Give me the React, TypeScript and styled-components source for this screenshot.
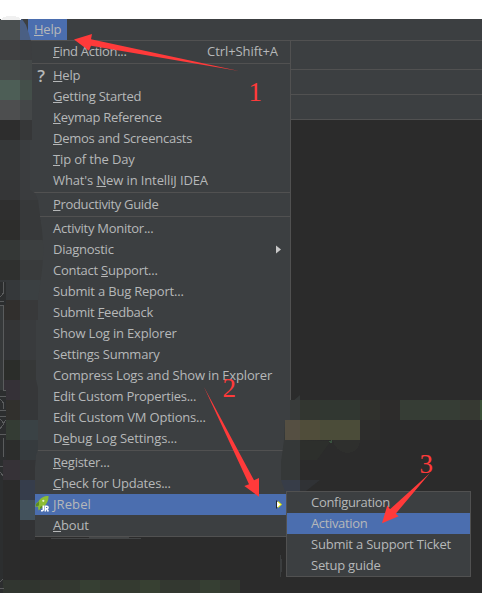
import React from "react";
import styled, { createGlobalStyle } from "styled-components";

const GlobalStyle = createGlobalStyle`
  * { box-sizing: border-box; }
  body { margin: 0; background: #fff; overflow: hidden; }
`;

const Page = styled.div`
  position: relative;
  width: 482px;
  height: 593px;
  overflow: hidden;
  display: flex;
  flex-direction: column;
  padding-top: 19px;
  background: #fff;
  color: #b6b8b9;
  font: 13px/21px "Open Sans", "Noto Sans", sans-serif;
  letter-spacing: -0.15px;
  white-space: pre;
`;

const MenuBar = styled.nav`
  height: 22px;
  flex: none;
  display: flex;
  padding-left: 28px;
  background: #3c3f41;
  border-bottom: 1px solid #515151;
`;

const MenuTitle = styled.div`
  width: 39px;
  padding-left: 6px;
  background: #4b6eaf;
`;

const Toolbar = styled.div<{ $height: number }>`
  height: ${(p) => p.$height}px;
  flex: none;
  background: #3c3f41;
  border-bottom: 1px solid #515151;
`;

const Editor = styled.main`
  flex: 1;
  background: #2b2b2b;
`;

const Popup = styled.div<{ $left: number; $top: number; $width: number }>`
  position: absolute;
  left: ${(p) => p.$left}px;
  top: ${(p) => p.$top}px;
  width: ${(p) => p.$width}px;
  background: #3c3f41;
  border: 1px solid #515151;
`;

const Row = styled.div<{ $active?: boolean; $indent: number }>`
  position: relative;
  height: 21px;
  display: flex;
  align-items: center;
  justify-content: space-between;
  padding: 0 8px 0 ${(p) => p.$indent}px;
  background: ${(p) => (p.$active ? "#4b6eaf" : "transparent")};
`;

const Label = styled.span<{ $spacing?: number }>`
  letter-spacing: ${(p) => p.$spacing ?? -0.15}px;
`;

const Shortcut = styled.span`
  margin-right: 4px;
  letter-spacing: -0.08px;
`;

const Mnemonic = styled.span`
  text-decoration: underline;
  text-decoration-thickness: 1px;
  text-underline-offset: 1px;
  text-decoration-skip-ink: none;
`;

const Separator = styled.hr`
  margin: 1px 0;
  height: 1px;
  border: 0;
  background: #515151;
`;

const RowIcon = styled.span`
  position: absolute;
  left: 13px;
  top: 1px;
  width: 14px;
  height: 20px;
  font: 600 17px/19px "Open Sans", sans-serif;
  text-align: center;
`;

const Overlay = styled.svg`
  position: absolute;
  inset: 0;
  pointer-events: none;
`;

const Callout = styled.text`
  font: 27px "Liberation Serif", serif;
  letter-spacing: 0;
  fill: #ff3a3a;
`;

type Item = {
  text: string;
  icon?: "help" | "jrebel";
  shortcut?: string;
  submenu?: boolean;
  active?: boolean;
  spacing?: number;
};

// An underscore precedes the mnemonic letter; null is a separator.
const helpItems: (Item | null)[] = [
  { text: "_Find Action...", shortcut: "Ctrl+Shift+A", spacing: -0.3 },
  null,
  { text: "_Help", icon: "help", spacing: -0.25 },
  { text: "_Getting Started", spacing: -0.25 },
  { text: "_Keymap Reference", spacing: -0.3 },
  { text: "_Demos and Screencasts", spacing: -0.25 },
  { text: "_Tip of the Day" },
  { text: "What's _New in IntelliJ IDEA", spacing: -0.12 },
  null,
  { text: "_Productivity Guide", spacing: -0.33 },
  null,
  { text: "Activity Monitor...", spacing: -0.27 },
  { text: "Diagnostic", submenu: true, spacing: -0.25 },
  { text: "Contact _Support...", spacing: -0.25 },
  { text: "Submit a Bug Report...", spacing: -0.2 },
  { text: "Submit _Feedback", spacing: -0.25 },
  { text: "Show Log in Explorer", spacing: -0.17 },
  { text: "Settings Summary", spacing: -0.2 },
  { text: "Compress Logs and Show in Explorer" },
  { text: "Edit Custom Properties...", spacing: -0.27 },
  { text: "Edit Custom VM Options...", spacing: -0.2 },
  { text: "D_ebug Log Settings...", spacing: -0.12 },
  null,
  { text: "_Register...", spacing: -0.25 },
  { text: "_Check for Updates...", spacing: -0.2 },
  { text: "JRebel", icon: "jrebel", submenu: true, active: true, spacing: 0.1 },
  { text: "_About", spacing: -0.2 },
];

const jrebelItems: Item[] = [
  { text: "Configuration", spacing: -0.3 },
  { text: "Activation", active: true, spacing: -0.35 },
  { text: "Submit a Support Ticket", spacing: -0.2 },
  { text: "Setup guide", spacing: -0.22 },
];

function MenuText({ text, spacing }: { text: string; spacing?: number }) {
  const at = text.indexOf("_");
  if (at < 0) return <Label $spacing={spacing}>{text}</Label>;
  return (
    <Label $spacing={spacing}>
      {text.slice(0, at)}
      <Mnemonic>{text[at + 1]}</Mnemonic>
      {text.slice(at + 2)}
    </Label>
  );
}

function SubmenuArrow({ active }: { active?: boolean }) {
  return (
    <svg width="6" height="9" viewBox="0 0 6 9">
      {active && <path d="M0 0v9l2-2V2z" fill="#20242c" />}
      {active && <path d="M2 1l4 3.5L2 8z" fill="#e6ee00" />}
      <path d={active ? "M1 1.2l3.5 3.3L1 7.8z" : "M0 .5L5 4.5 0 8.5z"} fill={active ? "#fff" : "#c8c8c8"} />
    </svg>
  );
}

function JRebelIcon() {
  return (
    <svg width="14" height="18" viewBox="0 0 14 18">
      <path d="M13.5 1C9 1 5 3 3.5 6.5L.8 9l-.3 3 2.5-.5.5 4 3-2.5C11 10.5 13.8 6 13.500 1z" fill="#8dbd35" />
      <path d="M4 6.500L1 9v2.500l3-1zM5 12l2.500-1.500v2L5 14z" fill="#5b8c24" />
      <circle cx="8.300" cy="5.800" r="1.100" fill="#e6f3c8" />
      <path d="M8.300 10.500v4q0 1.500-2.300 1.200M10.300 16.500V11.200h1.500q1.300 0 1.300 1.300t-1.300 1.300h-1.500M11.700 13.800l1.700 2.700" fill="none" stroke="#fff" strokeWidth="1.500" />
    </svg>
  );
}

const BrandIcon = styled(RowIcon)`
  left: 14px;
  top: 1px;
`;

function MenuRow({ item, indent }: { item: Item; indent: number }) {
  return (
    <Row $active={item.active} $indent={indent}>
      {item.icon === "help" && <RowIcon>?</RowIcon>}
      {item.icon === "jrebel" && (
        <BrandIcon>
          <JRebelIcon />
        </BrandIcon>
      )}
      <MenuText text={item.text} spacing={item.spacing} />
      {item.shortcut && <Shortcut>{item.shortcut}</Shortcut>}
      {item.submenu && <SubmenuArrow active={item.active} />}
    </Row>
  );
}

const outerColumn = [
  "#4a4f50", "#3f4041", "#464b4a", "#4d5e56", "#4d4e4f", "#2d2d2d", "#353738", "#363738", "#353637",
  "#2f2f2f", "#2d2d2c", "#343736", "#2f302f", "#35383a", "#312f2d", "#343536", "#323436", "#2b2d2a",
  "#353137", "#31302d", "#343c34", "#2c2d2c", "#363237", "#2b2b2b", "#2b2b2b", "#2b2b2b", "#2b2b2b",
  "#2b2b2b", "#313630",
];
const innerColumn = [
  "#4a5f83", "#3c3e40", "#444848", "#444f4a", "#444748", "#363738", "#3a3d3f", "#3b3d3f", "#3a3c3e",
  "#37393a", "#37393a", "#3c3f40", "#393b3c", "#3b4042", "#38393a", "#393b3d", "#393b3d", "#363838",
  "#363739", "#353739", "#3a4245", "#363b3e", "#343537", "#363d4b", "#43525c", "#323335", "#2a2a2a",
  "#2a2a2a", "#30352f",
];

// [x, y, width, height, colour]
const patches: [number, number, number, number, string][] = [
  [290, 400, 10, 20, "#383b3a"],
  [300, 400, 20, 20, "#323630"],
  [320, 400, 40, 20, "#313731"],
  [360, 400, 20, 20, "#30312d"],
  [380, 400, 20, 20, "#2d2c2b"],
  [400, 400, 60, 20, "#363d35"],
  [460, 400, 20, 20, "#363932"],
  [480, 400, 2, 20, "#3b5038"],
  [285, 420, 15, 20, "#554f42"],
  [300, 420, 20, 20, "#504d3a"],
  [320, 420, 40, 20, "#4b4c39"],
  [360, 420, 20, 20, "#2d2d2c"],
  [40, 580, 20, 13, "#333630"],
  [60, 580, 20, 13, "#333830"],
  [80, 580, 20, 13, "#363f33"],
  [100, 580, 40, 13, "#343a30"],
  [140, 580, 20, 13, "#374032"],
  [160, 580, 40, 13, "#333830"],
  [200, 580, 20, 13, "#363f33"],
  [220, 580, 20, 13, "#333830"],
];

function Mosaic() {
  return (
    <Overlay width="482" height="593" shapeRendering="crispEdges">
      <defs>
        <clipPath id="edge">
          <path d="M0 19H22L26 25 29 34 31 41 32 60V140H30V190L35 193 38 200 40 215V217L42 230 43.500 250 42 270 40 285 38 300V320H36V380L38 388V450L36 455 35 467V540H40V593H0Z" />
        </clipPath>
        <clipPath id="smear">
          <path d="M300 395L292 402 290 420 285 420 284 440 281 462V480L286 494 300 494 306 491 320 480 300 480V460H317L331 441 300 440Z" />
        </clipPath>
      </defs>
      <g clipPath="url(#edge)">
        {outerColumn.map((c, i) => (
          <rect key={i} x="0" y={20 + i * 20 - (i ? 0 : 1)} width="20" height="21" fill={c} />
        ))}
        {innerColumn.map((c, i) => (
          <rect key={i} x="20" y={20 + i * 20 - (i ? 0 : 1)} width="24" height="21" fill={c} />
        ))}
      </g>
      <path d="M1 20Q2 16 11 16 20 16 21 20Z" fill="#f0f0f0" />
      <g clipPath="url(#smear)">
        <path d="M280 395H300V480H280Z" fill="#353838" />
        <path d="M280 480H300V496H280Z" fill="#373d48" />
        <path d="M300 440H332V462H300Z" fill="#2d2f2c" />
        <path d="M300 480H322V496H300Z" fill="#303235" />
      </g>
      {patches.map(([x, y, w, h, c]) => (
        <rect key={`${x}-${y}`} x={x} y={y} width={w} height={h} fill={c} />
      ))}
      <path d="M333 440H360Q359 452 347 453 335 451 333 440Z" fill="#2e2f2d" />
      <path d="M328 442L332 440V443Z" fill="#3b5340" />
      <path d="M51 538H141V539H51ZM89 537H129V538H89Z" fill="#434546" />
      <path d="M280 555H281V577H280ZM281 559H282V572H281Z" fill="#3b3d3e" />
      <path d="M0 282H6V305H0ZM0 390H6V460H0ZM0 460H3V593H0Z" fill="#2c2e2f" />
      <path d="M0 305H3V390H0Z" fill="#36393a" />
      <g fill="none" stroke="#5a5c5d" strokeWidth="1">
        <path d="M3.500 282V293L0 297M0 301.500H4M0 305.500H3.500V390.500H6M0 396.500H6M0 399L3.500 403V409M0 410.500H6M0 416.500H6M0 419L3.500 423 6 420M0 429L3.500 424M0 434.500H6M3.500 438V457M0 466H3M0 472L3 476M0 582L3 579M0 588.500H4" />
      </g>
    </Overlay>
  );
}

function Annotations() {
  return (
    <Overlay width="482" height="593">
      <g fill="#ff3a3a">
        <path d="M74 39.600L92 34 91 39.300 239 71 91 45.700 89 50.700Z" />
        <path d="M259 496.800V478L254 480.300 204 387 249 484.300 244.300 486Z" />
        <path d="M382 523.300L387.300 505.300 390 509.300 430 473 395.700 513.700 398.700 516.300Z" />
      </g>
      <Callout x="248.500" y="101">1</Callout>
      <Callout x="222.500" y="397">2</Callout>
      <Callout x="419.500" y="473">3</Callout>
    </Overlay>
  );
}

export default function App() {
  return (
    <Page>
      <GlobalStyle />
      <MenuBar>
        <MenuTitle>
          <MenuText text="_Help" spacing={-0.25} />
        </MenuTitle>
      </MenuBar>
      <Toolbar $height={29} />
      <Toolbar $height={25} />
      <Toolbar $height={25} />
      <Editor />
      <Popup $left={20} $top={40} $width={271}>
        {helpItems.map((item, i) =>
          item ? <MenuRow key={i} item={item} indent={32} /> : <Separator key={i} />
        )}
      </Popup>
      <Mosaic />
      <Popup $left={286} $top={491} $width={185}>
        {jrebelItems.map((item) => (
          <MenuRow key={item.text} item={item} indent={24} />
        ))}
      </Popup>
      <Annotations />
    </Page>
  );
}
